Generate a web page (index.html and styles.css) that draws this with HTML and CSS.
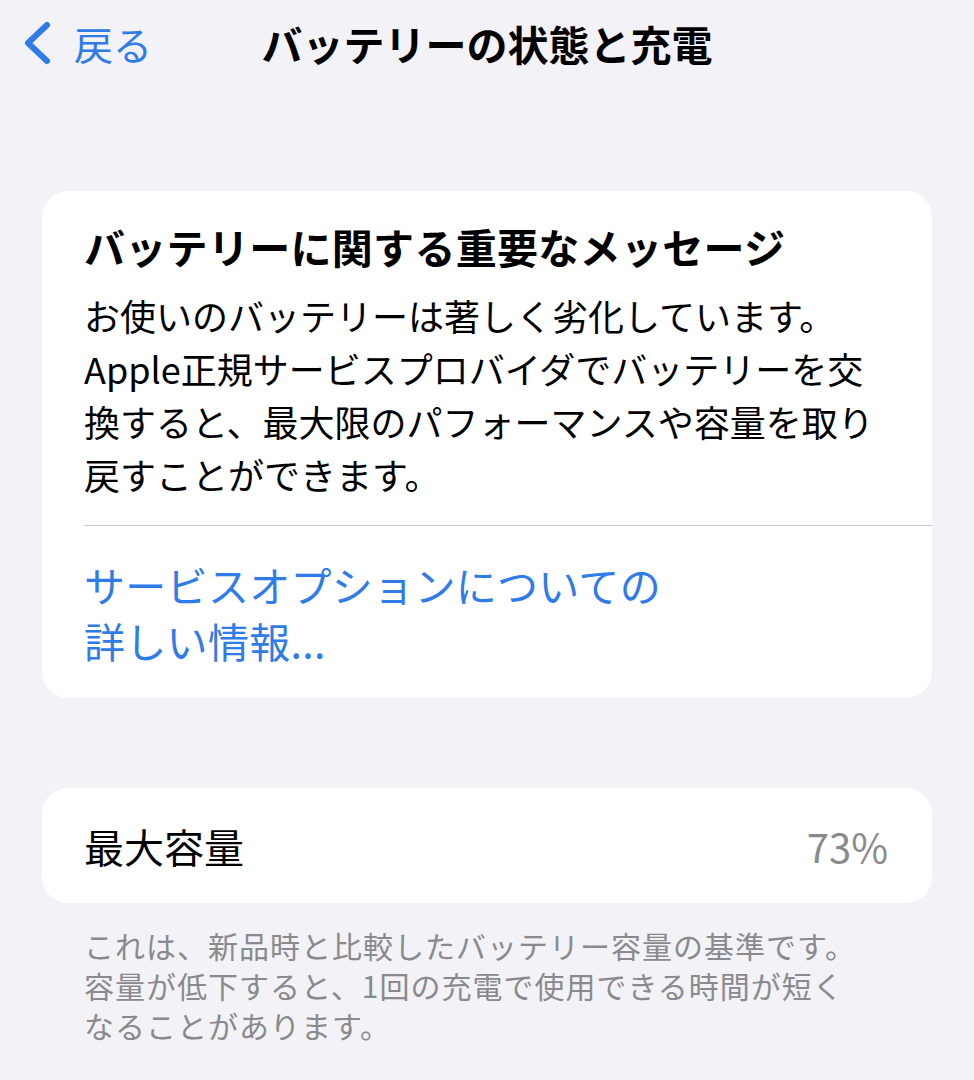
FILE: index.html
```html
<!DOCTYPE html>
<html lang="ja">
<head>
  <meta charset="UTF-8">
  <meta name="viewport" content="width=device-width, initial-scale=1.0">
  <title>バッテリーの状態と充電</title>
  <link rel="stylesheet" href="styles.css">
</head>
<body>
  <header class="nav">
    <a class="back" href="#">
      <svg class="chevron" width="30" height="44" viewBox="0 0 30 44">
        <path d="M25 4 L6 22 L25 40" fill="none" stroke="currentColor" stroke-width="6" stroke-linecap="round" stroke-linejoin="round"/>
      </svg>
      <span>戻る</span>
    </a>
    <h1 class="title">バッテリーの状態と充電</h1>
    <div></div>
  </header>

  <main class="content">
    <section class="card">
      <div class="message">
        <h2>バッテリーに関する重要なメッセージ</h2>
        <p>お使いのバッテリーは著しく劣化しています。<br>Apple正規サービスプロバイダでバッテリーを交<br>換すると、最大限のパフォーマンスや容量を取り<br>戻すことができます。</p>
      </div>
      <a class="link" href="#">サービスオプションについての<br>詳しい情報...</a>
    </section>

    <section class="card row">
      <span class="label">最大容量</span>
      <span class="value">73%</span>
    </section>
    <p class="footnote">これは、新品時と比較したバッテリー容量の基準です。<br>容量が低下すると、1回の充電で使用できる時間が短く<br>なることがあります。</p>
  </main>
</body>
</html>
```

FILE: styles.css
```css
body {
  margin: 0;
  background: #f2f2f7;
  font-family: "Noto Sans CJK JP", "Noto Sans", sans-serif;
  color: #000;
}
a { text-decoration: none; }

.nav {
  display: grid;
  grid-template-columns: 1fr auto 1fr;
  align-items: center;
  padding: 19px 0 0;
  height: 48px;
}
.back {
  display: flex;
  align-items: center;
  gap: 22px;
  padding-left: 22px;
  color: #2f7bea;
  font-size: 39px;
  line-height: 48px;
}
.chevron { display: block; }
.title {
  margin: 0;
  font-size: 41px;
  line-height: 48px;
  font-weight: 700;
}

.content {
  padding: 124px 42px 0;
}
.card {
  background: #fff;
  border-radius: 26px;
}
.message {
  margin-left: 42px;
  padding: 30px 0 24px;
  border-bottom: 1px solid #c8c8cc;
}
.message h2 {
  margin: 0;
  font-size: 41px;
  line-height: 50px;
  font-weight: 700;
  letter-spacing: 0.3px;
}
.message p {
  margin: 18px 0 0;
  font-size: 36px;
  line-height: 53px;
  white-space: nowrap;
}
.link {
  display: block;
  padding: 30px 42px 30px;
  color: #2f7bea;
  font-size: 41px;
  line-height: 56px;
  letter-spacing: 0.3px;
}

.row {
  margin-top: 90px;
  height: 115px;
  display: flex;
  align-items: center;
  justify-content: space-between;
  padding: 0 44px 0 42px;
  font-size: 40px;
}
.value { color: #8a8a8e; }

.footnote {
  margin: 22px 42px 0;
  color: #8a8a8e;
  font-size: 30px;
  line-height: 40px;
  letter-spacing: 1px;
  white-space: nowrap;
}
```
